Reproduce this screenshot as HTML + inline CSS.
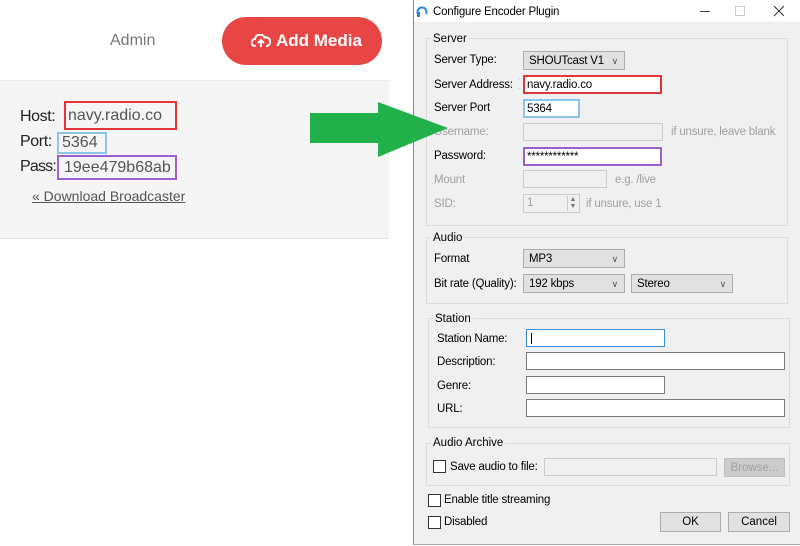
<!DOCTYPE html>
<html><head><meta charset="utf-8"><style>
*{margin:0;padding:0;box-sizing:border-box}
body{width:800px;height:546px;position:relative;background:#fff;overflow:hidden;font-family:"Liberation Sans",sans-serif}
.a{position:absolute}
.w{font-size:11.5px;color:#000;white-space:nowrap;line-height:18px;letter-spacing:-0.2px}
.in.w{line-height:13px}
.g{color:#a0a0a0}
.grp{position:absolute;border:1px solid #dcdcdc}
.gl{position:absolute;background:#f0f0f0;padding:0 2px;font-size:11.5px;line-height:16px}
.in{position:absolute;background:#fff;border:1px solid #7a7a7a}
.dis{background:#f0f0f0;border:1px solid #ccc}
.cb{position:absolute;background:#e1e1e1;border:1px solid #adadad;font-size:11.5px;line-height:18px;padding-left:5px;letter-spacing:-0.2px}
.cb:after{content:"\2228";position:absolute;right:6px;top:0;font-size:9px;color:#555}
.chk{position:absolute;width:13px;height:13px;border:1px solid #333;background:#fff}
.btn{position:absolute;background:#e1e1e1;border:1px solid #adadad;font-size:11.5px;text-align:center;line-height:18px}
.lt{font-family:"Liberation Sans",sans-serif}
.lb{letter-spacing:-0.4px}
</style></head><body>
<!-- left web panel -->
<div class="a lt" style="left:110px;top:32px;font-size:16px;color:#777">Admin</div>
<div class="a" style="left:222px;top:17px;width:160px;height:48px;border-radius:24px;background:#e84545;color:#fff;font-weight:bold;font-size:17px;line-height:48px;padding-left:54px">Add Media</div>
<svg class="a" style="left:251px;top:34px" width="20" height="14" viewBox="0 0 20 14"><path d="M5 12H4a3.5 3.5 0 0 1 0-7 5 5 0 0 1 9.5-1.5A4 4 0 0 1 16 12h-1" fill="none" stroke="#fff" stroke-width="2"/><path d="M10 13V6M7 9l3-3 3 3" fill="none" stroke="#fff" stroke-width="2"/></svg>
<div class="a" style="left:0;top:80px;width:389px;height:159px;background:#f5f5f5;border-top:1px solid #ececec;border-bottom:1px solid #e4e4e4"></div>
<div class="a lt lb" style="left:20px;top:107px;font-size:16px;color:#222;line-height:20px">Host:</div>
<div class="a lt" style="left:64px;top:101px;width:113px;height:29px;border:2px solid #e3343a;font-size:16px;color:#555;padding-left:2px;line-height:25px">navy.radio.co</div>
<div class="a lt lb" style="left:20px;top:132px;font-size:16px;color:#222;line-height:20px">Port:</div>
<div class="a lt" style="left:57px;top:132px;width:50px;height:22px;border:2px solid #8cc4ea;font-size:16px;color:#555;padding-left:3px;line-height:18px">5364</div>
<div class="a lt lb" style="left:20px;top:157px;font-size:16px;color:#222;line-height:20px;letter-spacing:-0.8px">Pass:</div>
<div class="a lt" style="left:57px;top:155px;width:120px;height:25px;border:2px solid #9b5fcf;font-size:16px;color:#555;padding-left:5px;line-height:21px">19ee479b68ab</div>
<div class="a lt" style="left:32px;top:188px;font-size:14px;color:#555;text-decoration:underline">« Download Broadcaster</div>
<!-- dialog -->
<div class="a" style="left:413px;top:0;width:387px;height:545px;background:#f0f0f0;border-left:1px solid #888;border-bottom:1px solid #aaa"></div>
<div class="a" style="left:414px;top:0;width:386px;height:22px;background:#fff"></div>
<svg class="a" style="left:416px;top:4px" width="12" height="14"><path d="M2 10A4.5 4.5 0 1 1 10 10" fill="none" stroke="#2b84d6" stroke-width="2"/><rect x="1" y="8" width="3" height="5" fill="#2b84d6"/></svg>
<div class="a w" style="left:433px;top:3px">Configure Encoder Plugin</div>
<div class="a" style="left:700px;top:11px;width:10px;height:1px;background:#444"></div>
<div class="a" style="left:735px;top:6px;width:10px;height:10px;border:1px solid #ccc"></div>
<svg class="a" style="left:773px;top:5px" width="12" height="12"><path d="M1 1L11 11M11 1L1 11" stroke="#333" stroke-width="1"/></svg>
<!-- server -->
<div class="grp" style="left:426px;top:38px;width:362px;height:188px"></div>
<div class="gl" style="left:431px;top:31px">Server</div>
<div class="a w" style="left:434px;top:51px">Server Type:</div>
<div class="cb" style="left:523px;top:51px;width:102px;height:19px">SHOUTcast V1</div>
<div class="a w" style="left:434px;top:76px">Server Address:</div>
<div class="in w" style="left:523px;top:75px;width:139px;height:19px;border:2px solid #e3343a;padding:2px 2px">navy.radio.co</div>
<div class="a w" style="left:434px;top:99px">Server Port</div>
<div class="in w" style="left:523px;top:99px;width:57px;height:19px;border:2px solid #8cc4ea;padding:2px 2px">5364</div>
<div class="a w g" style="left:434px;top:123px">Username:</div>
<div class="in dis" style="left:523px;top:123px;width:140px;height:18px"></div>
<div class="a w g" style="left:671px;top:123px">if unsure, leave blank</div>
<div class="a w" style="left:434px;top:147px">Password:</div>
<div class="in w" style="left:523px;top:147px;width:139px;height:19px;border:2px solid #9b5fcf;padding:2px 2px">************</div>
<div class="a w g" style="left:434px;top:171px">Mount</div>
<div class="in dis" style="left:523px;top:170px;width:84px;height:18px"></div>
<div class="a w g" style="left:615px;top:171px">e.g. /live</div>
<div class="a w g" style="left:434px;top:195px">SID:</div>
<div class="in dis w g" style="left:523px;top:194px;width:57px;height:19px;padding:2px 3px">1</div>
<div class="a" style="left:567px;top:196px;width:11px;height:15px;border-left:1px solid #ccc;font-size:7px;color:#777;line-height:7px;text-align:center">▲<br>▼</div>
<div class="a w g" style="left:586px;top:195px">if unsure, use 1</div>
<!-- audio -->
<div class="grp" style="left:426px;top:237px;width:362px;height:67px"></div>
<div class="gl" style="left:431px;top:230px">Audio</div>
<div class="a w" style="left:434px;top:250px">Format</div>
<div class="cb" style="left:523px;top:249px;width:102px;height:19px">MP3</div>
<div class="a w" style="left:434px;top:275px">Bit rate (Quality):</div>
<div class="cb" style="left:523px;top:274px;width:102px;height:19px">192 kbps</div>
<div class="cb" style="left:631px;top:274px;width:102px;height:19px">Stereo</div>
<!-- station -->
<div class="grp" style="left:428px;top:318px;width:362px;height:110px"></div>
<div class="gl" style="left:433px;top:311px">Station</div>
<div class="a w" style="left:437px;top:330px">Station Name:</div>
<div class="in" style="left:526px;top:329px;width:139px;height:18px;border-color:#3c8fd6"><div style="position:absolute;left:4px;top:3px;width:1px;height:11px;background:#000"></div></div>
<div class="a w" style="left:437px;top:353px">Description:</div>
<div class="in" style="left:526px;top:352px;width:259px;height:18px"></div>
<div class="a w" style="left:437px;top:377px">Genre:</div>
<div class="in" style="left:526px;top:376px;width:139px;height:18px"></div>
<div class="a w" style="left:437px;top:400px">URL:</div>
<div class="in" style="left:526px;top:399px;width:259px;height:18px"></div>
<!-- archive -->
<div class="grp" style="left:426px;top:443px;width:364px;height:43px"></div>
<div class="gl" style="left:431px;top:435px">Audio Archive</div>
<div class="chk" style="left:433px;top:460px"></div>
<div class="a w" style="left:450px;top:458px">Save audio to file:</div>
<div class="in dis" style="left:544px;top:458px;width:173px;height:18px"></div>
<div class="btn" style="left:724px;top:458px;width:61px;height:19px;color:#a0a0a0;background:#ccc;border-color:#bfbfbf">Browse...</div>
<div class="chk" style="left:428px;top:494px"></div>
<div class="a w" style="left:444px;top:491px">Enable title streaming</div>
<div class="chk" style="left:428px;top:516px"></div>
<div class="a w" style="left:444px;top:513px">Disabled</div>
<div class="btn" style="left:660px;top:512px;width:61px;height:20px">OK</div>
<div class="btn" style="left:728px;top:512px;width:62px;height:20px">Cancel</div>
<!-- arrow over dialog -->
<svg class="a" style="left:308px;top:98px" width="142" height="62"><polygon points="2,15 70,15 70,4 140,30 70,59 70,45 2,45" fill="#22b04b"/></svg>
</body></html>
